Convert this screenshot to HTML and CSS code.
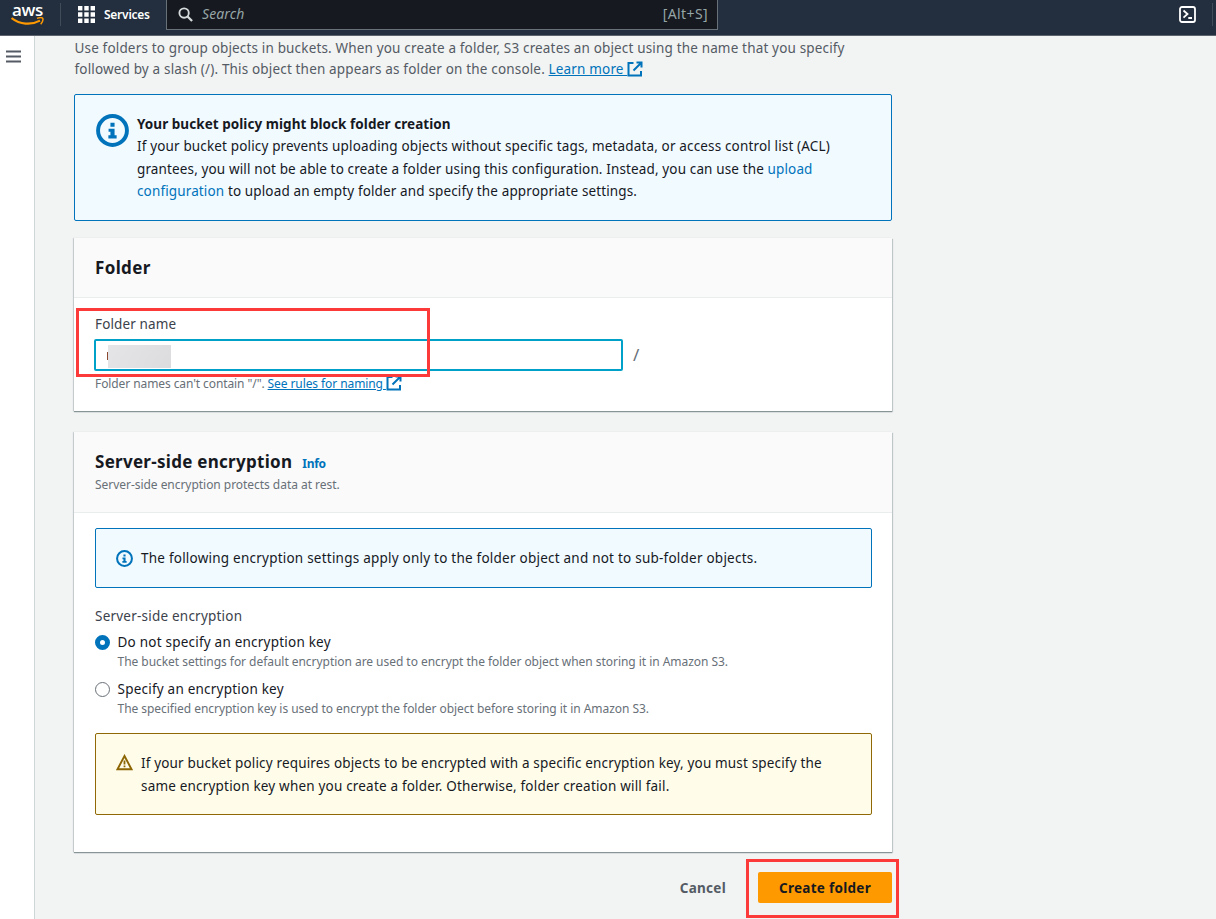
FILE: index.html
```html
<!DOCTYPE html>
<html lang="en">
<head>
<meta charset="utf-8">
<title>Create folder</title>
<link rel="stylesheet" href="styles.css">
</head>
<body>
<svg class="defs" width="0" height="0">
  <symbol id="info" viewBox="0 0 16 16"><circle cx="8" cy="8" r="7" fill="none" stroke="currentColor" stroke-width="1.9"/><path d="M7 4.200h2v2H7zM6.100 7.100H9v3.200h1v1.600H6v-1.600h1V8.600h-.9z" fill="currentColor"/></symbol>
  <symbol id="external" viewBox="0 0 16 16"><path d="M6.500 2H1.500v12.500H14V10M9.500 1.500h5v5M14 2L6.500 9.500" fill="none" stroke="currentColor" stroke-width="2"/></symbol>
</svg>
<header class="topbar">
  <a class="logo"><span class="logo-text">aws</span><svg class="smile" viewBox="0 0 33 10"><path d="M.5 1C9 7.500 20 8.500 29 3.600" fill="none" stroke="#f90" stroke-width="2.200"/><path d="M26 1.400c3-1 5-.8 5.700-.2.500 1.200-.2 4-2 6" fill="none" stroke="#f90" stroke-width="1.500"/></svg></a>
  <span class="divider"></span>
  <svg class="grid-icon" viewBox="0 0 17 17" fill="#fff"><path d="M0 0h4.400v4.400H0zM6.300 0h4.400v4.400H6.300zM12.600 0H17v4.400h-4.400zM0 6.300h4.400v4.400H0zM6.300 6.300h4.400v4.400H6.300zM12.600 6.300H17v4.400h-4.400zM0 12.600h4.400V17H0zM6.300 12.600h4.400V17H6.300zM12.600 12.600H17V17h-4.400z"/></svg>
  <span class="services">Services</span>
  <div class="search"><svg class="lens" viewBox="0 0 16 16"><circle cx="6.500" cy="6.500" r="5" fill="none" stroke="#d5dbdb" stroke-width="2"/><path d="M10.200 10.200L15 15" stroke="#d5dbdb" stroke-width="2.400"/></svg><span class="placeholder">Search</span><span class="shortcut">[Alt+S]</span></div>
  <svg class="shell" viewBox="0 0 17 17" fill="none" stroke="#fff"><rect x="1" y="1" width="15" height="15" rx="2" stroke-width="1.800"/><path d="M4.500 4.500L8.500 8l-4 3.600M9.300 12H13" stroke-width="1.800"/></svg>
  <span class="divider end"></span>
</header>
<div class="shell-body">
  <nav class="side"><svg viewBox="0 0 15 13" width="15" height="13"><path d="M0 1.500h15M0 6.500h15M0 11.500h15" stroke="#545b64" stroke-width="2"/></svg></nav>
  <main class="content">
    <p class="intro"><span>Use folders to group objects in buckets. When you create a folder, S3 creates an object using the name that you specify</span><br><span>followed by a slash (/). This object then appears as folder on the console. <a class="link under">Learn more <svg class="ext"><use href="#external"/></svg></a></span></p>
    <section class="alert policy">
      <svg class="big-info"><use href="#info"/></svg>
      <div><strong class="a0">Your bucket policy might block folder creation</strong><br><span class="a1">If your bucket policy prevents uploading objects without specific tags, metadata, or access control list (ACL)</span><br><span class="a2">grantees, you will not be able to create a folder using this configuration. Instead, you can use the <a class="link">upload</a></span><br><span class="a2"><a class="link">configuration</a> to upload an empty folder and specify the appropriate settings.</span></div>
    </section>
    <section class="card folder">
      <div class="card-head"><h2 class="h-folder">Folder</h2></div>
      <div class="card-body">
        <label class="label l-name">Folder name</label>
        <div class="field"><div class="input"><span class="caret"></span><span class="masked"></span></div><span class="slash">/</span></div>
        <p class="hint">Folder names can't contain "/". <a class="link under">See rules for naming <svg class="ext"><use href="#external"/></svg></a></p>
      </div>
      <div class="mark mark-name"></div>
    </section>
    <section class="card encryption">
      <div class="card-head"><div class="title-row"><h2 class="h-enc">Server-side encryption</h2><a class="info">Info</a></div><p class="sub">Server-side encryption protects data at rest.</p></div>
      <div class="card-body">
        <div class="alert inner"><svg class="small-info"><use href="#info"/></svg><span class="b1">The following encryption settings apply only to the folder object and not to sub-folder objects.</span></div>
        <p class="label l-enc">Server-side encryption</p>
        <div class="option"><span class="radio checked"></span><div><p class="title">Do not specify an encryption key</p><p class="desc">The bucket settings for default encryption are used to encrypt the folder object when storing it in Amazon S3.</p></div></div>
        <div class="option"><span class="radio"></span><div><p class="title">Specify an encryption key</p><p class="desc">The specified encryption key is used to encrypt the folder object before storing it in Amazon S3.</p></div></div>
        <div class="alert warning"><svg class="warn-icon" viewBox="0 0 17 17"><path d="M8.500 2L15.500 15.200H1.500z" fill="none" stroke="#8d6605" stroke-width="1.900"/><path d="M7.600 6.500h1.800v4H7.600zM7.600 11.400h1.800v1.800H7.600z" fill="#8d6605"/></svg><div><span class="w1">If your bucket policy requires objects to be encrypted with a specific encryption key, you must specify the</span><br><span class="w2">same encryption key when you create a folder. Otherwise, folder creation will fail.</span></div></div>
      </div>
    </section>
    <footer class="actions"><button class="cancel">Cancel</button><div class="primary-wrap"><button class="primary">Create folder</button><div class="mark mark-create"></div></div></footer>
  </main>
</div>
</body>
</html>
```
FILE: styles.css
```css
* { box-sizing: border-box; }
body { margin: 0; width: 1216px; height: 919px; overflow: hidden; background: #f2f3f3; color: #16191f; font: 13.5px/22.5px "Noto Sans", "Open Sans", sans-serif; }
p, h2 { margin: 0; }
span, a, strong { white-space: nowrap; }
svg { flex: none; }
.defs { display: block; }
.topbar { display: flex; height: 36px; background: #232f3e; border-bottom: 1px solid #5c636c; color: #fff; }
.logo { width: 33px; margin-left: 11px; display: flex; flex-direction: column; }
.logo-text { font: 600 17px/20px "Open Sans", sans-serif; height: 17px; padding-left: 1px; letter-spacing: -.4px; }
.smile { width: 33px; height: 10px; }
.divider { width: 1px; height: 23px; margin: 3px 0 0 16px; background: #414c59; }
.grid-icon { width: 17px; height: 17px; margin: 6px 0 0 17px; }
.services { font-weight: 600; font-size: 12px; line-height: 29px; margin-left: 9px; width: 62px; letter-spacing: -.25px; color: #fff; }
.search { display: flex; align-items: center; width: 552px; height: 30px; padding: 0 9px 0 11px; background: #16191f; border: 1px solid #687078; border-width: 0 1px 1px; }
.lens { width: 15px; height: 15px; }
.placeholder { flex: 1; margin-left: 9px; font-style: italic; font-size: 14px; letter-spacing: .1px; color: #95a5a6; }
.shortcut { color: #95a5a6; font-size: 14px; letter-spacing: .4px; }
.shell { width: 17px; height: 17px; margin: 6px 0 0 461px; }
.divider.end { margin-left: 16px; }
.shell-body { display: flex; height: 883px; }
.side { width: 35px; background: #fff; border-right: 1px solid #cfd6d6; padding: 14px 0 0 6px; line-height: 0; }
.content { width: 819px; margin-left: 39px; padding-top: 2px; }
.link { color: #0073bb; }
.under { text-decoration: underline; }
.intro { line-height: 20.5px; color: #545b64; height: 56px; padding-left: .5px; letter-spacing: .163px; }
.ext { width: 16px; height: 16px; vertical-align: -3px; color: #0073bb; }
.alert { display: flex; background: #f1faff; border: 1px solid #0073bb; border-radius: 2px; }
.policy { width: 818px; height: 127px; padding: 18px 21px; }
.policy > div { line-height: 22.4px; }
.a0 { letter-spacing: .05px; }
.a1 { letter-spacing: .15px; }
.a2 { letter-spacing: .133px; }
.big-info { width: 33px; height: 33px; margin: 1px 8px 0 0; color: #0073bb; }
.card { position: relative; width: 818px; background: #fff; box-shadow: 0 1px 1px #879596, 1px 1px 1px #cbd1d2, -1px 0 1px #d2d6d8; }
.folder { height: 173px; margin-top: 17px; }
.card-head { background: #fafafa; border-bottom: 1px solid #eaeded; padding: 0 21px; }
.folder .card-head { height: 60px; }
h2 { font-size: 17px; line-height: 24px; font-weight: 700; }
.h-folder { padding-top: 18px; letter-spacing: .35px; }
.h-enc { letter-spacing: .28px; }
.card-body { padding: 15px 21px; }
.label { display: block; color: #3b424b; }
.l-name { height: 26px; letter-spacing: .13px; }
.field { display: flex; align-items: center; gap: 10px; }
.input { display: flex; width: 529px; height: 32px; padding: 4px 10px; border: 2px solid #00a1c9; border-radius: 2px; margin-left: -1px; background: #fff; }
.caret { width: 1px; height: 8px; margin-top: 7px; background: #8a4b30; margin-left: 1px; }
.masked { width: 63px; height: 23px; background: linear-gradient(120deg, #e5e5e8, #dcdcdf); }
.slash { color: #687078; font-size: 17px; line-height: 20px; }
.hint { font-size: 12px; line-height: 20px; margin-top: 3px; color: #687078; letter-spacing: -.09px; }
.mark { position: absolute; border: 3px solid #fc3a3a; }
.mark-name { left: 2px; top: 70px; width: 354px; height: 69px; }
.encryption { height: 420px; margin-top: 21px; }
.encryption .card-head { height: 81px; padding-top: 18px; }
.title-row { display: flex; align-items: baseline; gap: 10px; height: 24px; }
.info { color: #0073bb; font-weight: 700; font-size: 12px; letter-spacing: -.3px; }
.sub { font-size: 12px; line-height: 22px; color: #687078; letter-spacing: -.04px; }
.inner { width: 777px; height: 60px; padding: 18px 20px; }
.b1 { letter-spacing: .228px; }
.small-info { width: 17px; height: 17px; margin: 3px 8px 0 0; color: #0073bb; }
.l-enc { margin-top: 17px; height: 26px; letter-spacing: .22px; }
.option { display: flex; height: 47px; margin-left: -.5px; }
.radio { width: 15px; height: 15px; border: 1.5px solid #687078; border-radius: 50%; margin: 4px 8px 0 0; background: #fff; }
.checked { border: 5px solid #0073bb; }
.title { letter-spacing: .22px; }
.desc { font-size: 12px; line-height: 16px; color: #687078; letter-spacing: -.04px; }
.warning { width: 777px; height: 82px; padding: 18px 20px; background: #fffdea; border-color: #906806; margin-top: 8px; }
.w1 { letter-spacing: .165px; }
.w2 { letter-spacing: .19px; }
.warn-icon { width: 17px; height: 17px; margin: 2px 8px 0 0; }
.actions { display: flex; justify-content: flex-end; align-items: center; gap: 32px; width: 818px; padding-top: 20px; }
button { font: 700 13.5px/20px "Noto Sans", sans-serif; letter-spacing: .28px; border: 0; padding: 0; background: none; white-space: nowrap; }
.cancel { color: #545b64; }
.primary-wrap { position: relative; height: 31px; }
.primary { width: 134px; height: 31px; background: #f90; border-radius: 2px; color: #16191f; }
.mark-create { left: -12px; top: -13px; width: 153px; height: 59px; }
```
